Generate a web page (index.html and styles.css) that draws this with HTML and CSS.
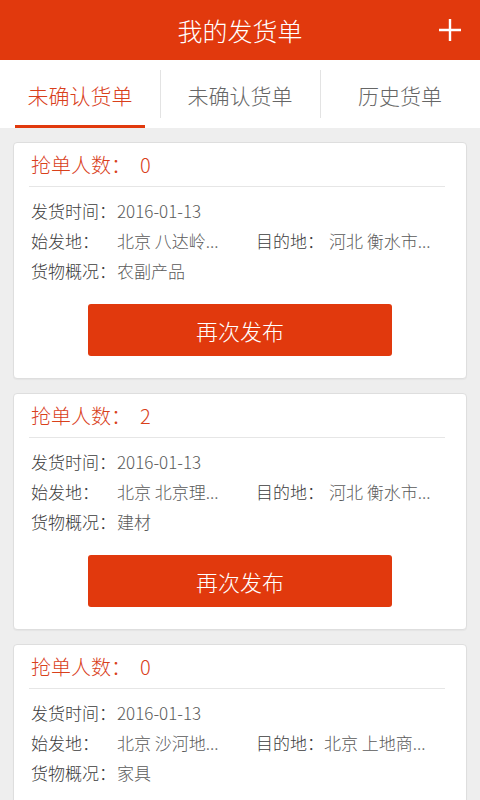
FILE: index.html
```html
<!DOCTYPE html>
<html lang="zh-CN">
<head>
    <meta charset="UTF-8">
    <meta name="viewport" content="width=device-width, initial-scale=1.0">
    <title>我的发货单</title>
    <link rel="stylesheet" href="styles.css">
</head>
<body>
    <div class="app">
        <header class="topbar">
            <span></span>
            <h1>我的发货单</h1>
            <button class="add" aria-label="新增">
                <svg width="24" height="24" viewBox="0 0 24 24">
                    <path d="M12 1v22M1 12h22" stroke="#fff" stroke-width="2.4" fill="none"/>
                </svg>
            </button>
        </header>

        <nav class="tabs">
            <div class="tab active">未确认货单</div>
            <div class="tab">未确认货单</div>
            <div class="tab">历史货单</div>
        </nav>

        <div class="list">
            <div class="card">
                <div class="card-title">抢单人数：<span class="count">0</span></div>
                <div class="info">
                    <div class="row full"><span class="label">发货时间：</span><span class="value">2016-01-13</span></div>
                    <div class="row"><span class="label">始发地：</span><span class="value">北京 八达岭...</span></div>
                    <div class="row"><span class="label short">目的地：</span><span class="value gap">河北 衡水市...</span></div>
                    <div class="row full"><span class="label">货物概况：</span><span class="value">农副产品</span></div>
                </div>
                <button class="republish">再次发布</button>
            </div>

            <div class="card">
                <div class="card-title">抢单人数：<span class="count">2</span></div>
                <div class="info">
                    <div class="row full"><span class="label">发货时间：</span><span class="value">2016-01-13</span></div>
                    <div class="row"><span class="label">始发地：</span><span class="value">北京 北京理...</span></div>
                    <div class="row"><span class="label short">目的地：</span><span class="value gap">河北 衡水市...</span></div>
                    <div class="row full"><span class="label">货物概况：</span><span class="value">建材</span></div>
                </div>
                <button class="republish">再次发布</button>
            </div>

            <div class="card">
                <div class="card-title">抢单人数：<span class="count">0</span></div>
                <div class="info">
                    <div class="row full"><span class="label">发货时间：</span><span class="value">2016-01-13</span></div>
                    <div class="row"><span class="label">始发地：</span><span class="value">北京 沙河地...</span></div>
                    <div class="row"><span class="label short">目的地：</span><span class="value">北京 上地商...</span></div>
                    <div class="row full"><span class="label">货物概况：</span><span class="value">家具</span></div>
                </div>
            </div>
        </div>
    </div>
</body>
</html>
```

FILE: styles.css
```css
body {
    margin: 0;
    font-family: "Noto Sans CJK SC", "Noto Sans", sans-serif;
    font-weight: 300;
    background-color: #eeeeee;
}
.app {
    height: 100vh;
    display: flex;
    flex-direction: column;
    overflow: hidden;
}
.topbar {
    height: 60px;
    flex: none;
    background-color: #e1390d;
    display: grid;
    grid-template-columns: 60px 1fr 60px;
    align-items: center;
}
.topbar h1 {
    margin: 0;
    text-align: center;
    color: #fff;
    font-size: 25px;
    font-weight: 300;
    line-height: 60px;
}
.add {
    background: none;
    border: none;
    padding: 0;
    display: flex;
    justify-content: center;
    align-items: center;
    height: 60px;
    cursor: pointer;
}
.tabs {
    flex: none;
    height: 68px;
    background: #fff;
    display: grid;
    grid-template-columns: repeat(3, 1fr);
}
.tab {
    position: relative;
    display: flex;
    justify-content: center;
    align-items: center;
    padding-top: 2px;
    font-size: 21px;
    color: #666;
}
.tab + .tab::before {
    content: "";
    position: absolute;
    left: 0;
    top: 10px;
    bottom: 10px;
    width: 1px;
    background: #e3e3e3;
}
.tab.active {
    color: #d9401b;
}
.tab.active::after {
    content: "";
    position: absolute;
    left: 15px;
    right: 15px;
    bottom: 0;
    height: 3px;
    background: #e1390d;
}
.list {
    flex: 1;
    overflow: hidden;
    padding: 14px 13px;
    display: flex;
    flex-direction: column;
    gap: 14px;
}
.card {
    flex: none;
    background: #fff;
    border: 1px solid #dedede;
    border-radius: 4px;
    padding: 0 15px 22px 15px;
    box-shadow: 0 1px 1px rgba(0,0,0,0.04);
}
.card-title {
    height: 43px;
    line-height: 43px;
    margin-right: 6px;
    padding-left: 2px;
    font-size: 20px;
    color: #d9401b;
    border-bottom: 1px solid #e6e6e6;
}
.count {
    margin-left: 9px;
}
.info {
    padding: 9px 0 0 2px;
    display: grid;
    grid-template-columns: 225px 1fr;
    font-size: 17px;
    line-height: 30px;
}
.row {
    white-space: nowrap;
}
.row.full {
    grid-column: 1 / -1;
}
.label {
    display: inline-block;
    width: 86px;
    color: #3c3c3c;
}
.label.short {
    width: auto;
}
.value {
    color: #5a5a5a;
}
.value.gap {
    margin-left: 5px;
}
.republish {
    display: block;
    width: 304px;
    height: 52px;
    margin: 18px auto 0;
    padding: 0;
    border: none;
    border-radius: 3px;
    background-color: #e1390d;
    color: #fff;
    font-family: inherit;
    font-weight: 300;
    font-size: 22px;
    cursor: pointer;
}
```
